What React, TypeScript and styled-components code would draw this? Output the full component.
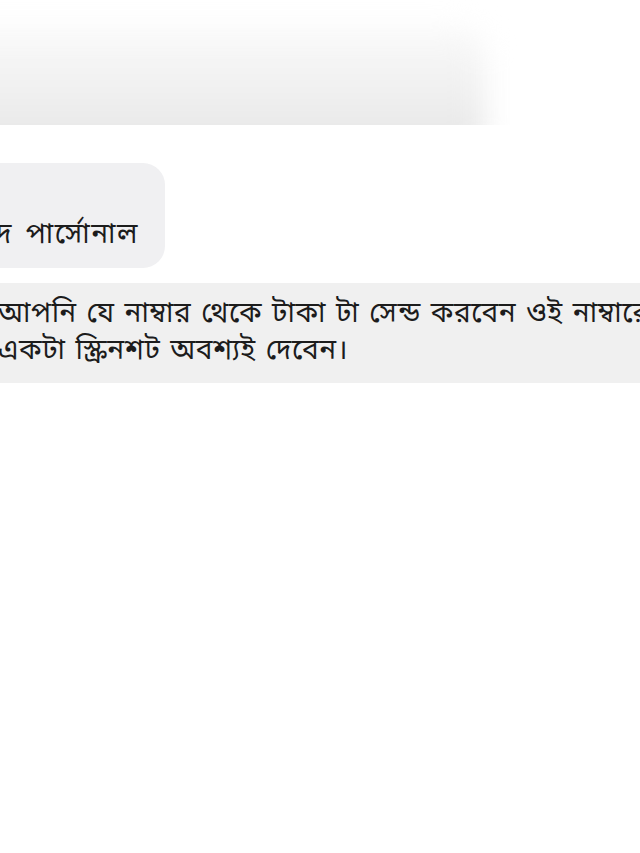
import React from 'react';
import styled, { createGlobalStyle } from 'styled-components';

const GlobalStyle = createGlobalStyle`
  html, body {
    margin: 0;
    padding: 0;
    background: #ffffff;
    overflow: hidden;
  }
  body {
    width: 640px;
    height: 853px;
  }
`;

const BENGALI_FONT = `"Noto Sans Bengali", "Noto Sans", "DejaVu Sans", "Liberation Sans", sans-serif`;

const App = () => {
  return (
    <Page>
      <GlobalStyle />
      <ShadowStrip>
        <BlurredCard />
      </ShadowStrip>
      <BubbleRow>
        <Bubble>
          <BubbleText>দ পার্সোনাল</BubbleText>
        </Bubble>
      </BubbleRow>
      <Notice>
        <NoticeLine>আপনি যে নাম্বার থেকে টাকা টা সেন্ড করবেন ওই নাম্বারের</NoticeLine>
        <NoticeLine>একটা স্ক্রিনশট অবশ্যই দেবেন।</NoticeLine>
      </Notice>
    </Page>
  );
};

export default App;

const Page = styled.div`
  display: flex;
  flex-direction: column;
  width: 640px;
  height: 853px;
  overflow: hidden;
  background: #ffffff;
  font-family: ${BENGALI_FONT};
  color: #1c1c1c;
`;

const ShadowStrip = styled.div`
  height: 125px;
  overflow: hidden;
`;

const BlurredCard = styled.div`
  margin: 26px 0 0 -60px;
  width: 545px;
  height: 140px;
  border-radius: 30px;
  background: linear-gradient(180deg, #fafafa 0%, #f0f0f0 45%, #e9e9e9 75%, #e2e2e2 100%);
  filter: blur(14px);
`;

const BubbleRow = styled.div`
  display: flex;
  padding-top: 38px;
`;

const Bubble = styled.div`
  display: flex;
  align-items: flex-end;
  margin-left: -40px;
  padding: 0 0 12px 0;
  height: 105px;
  box-sizing: border-box;
  width: 205px;
  border-radius: 22px;
  background: #f0f0f2;
`;

const BubbleText = styled.span`
  font-size: 28px;
  line-height: 40px;
  white-space: nowrap;
  letter-spacing: 1.5px;
  word-spacing: 4px;
  margin-left: 36px;
`;

const Notice = styled.div`
  display: flex;
  flex-direction: column;
  justify-content: center;
  margin-top: 15px;
  height: 100px;
  background: #f0f0f0;
`;

const NoticeLine = styled.div`
  font-size: 28px;
  line-height: 37px;
  white-space: nowrap;
  letter-spacing: 0.6px;
  word-spacing: 2px;
  margin-left: -2px;
`;
